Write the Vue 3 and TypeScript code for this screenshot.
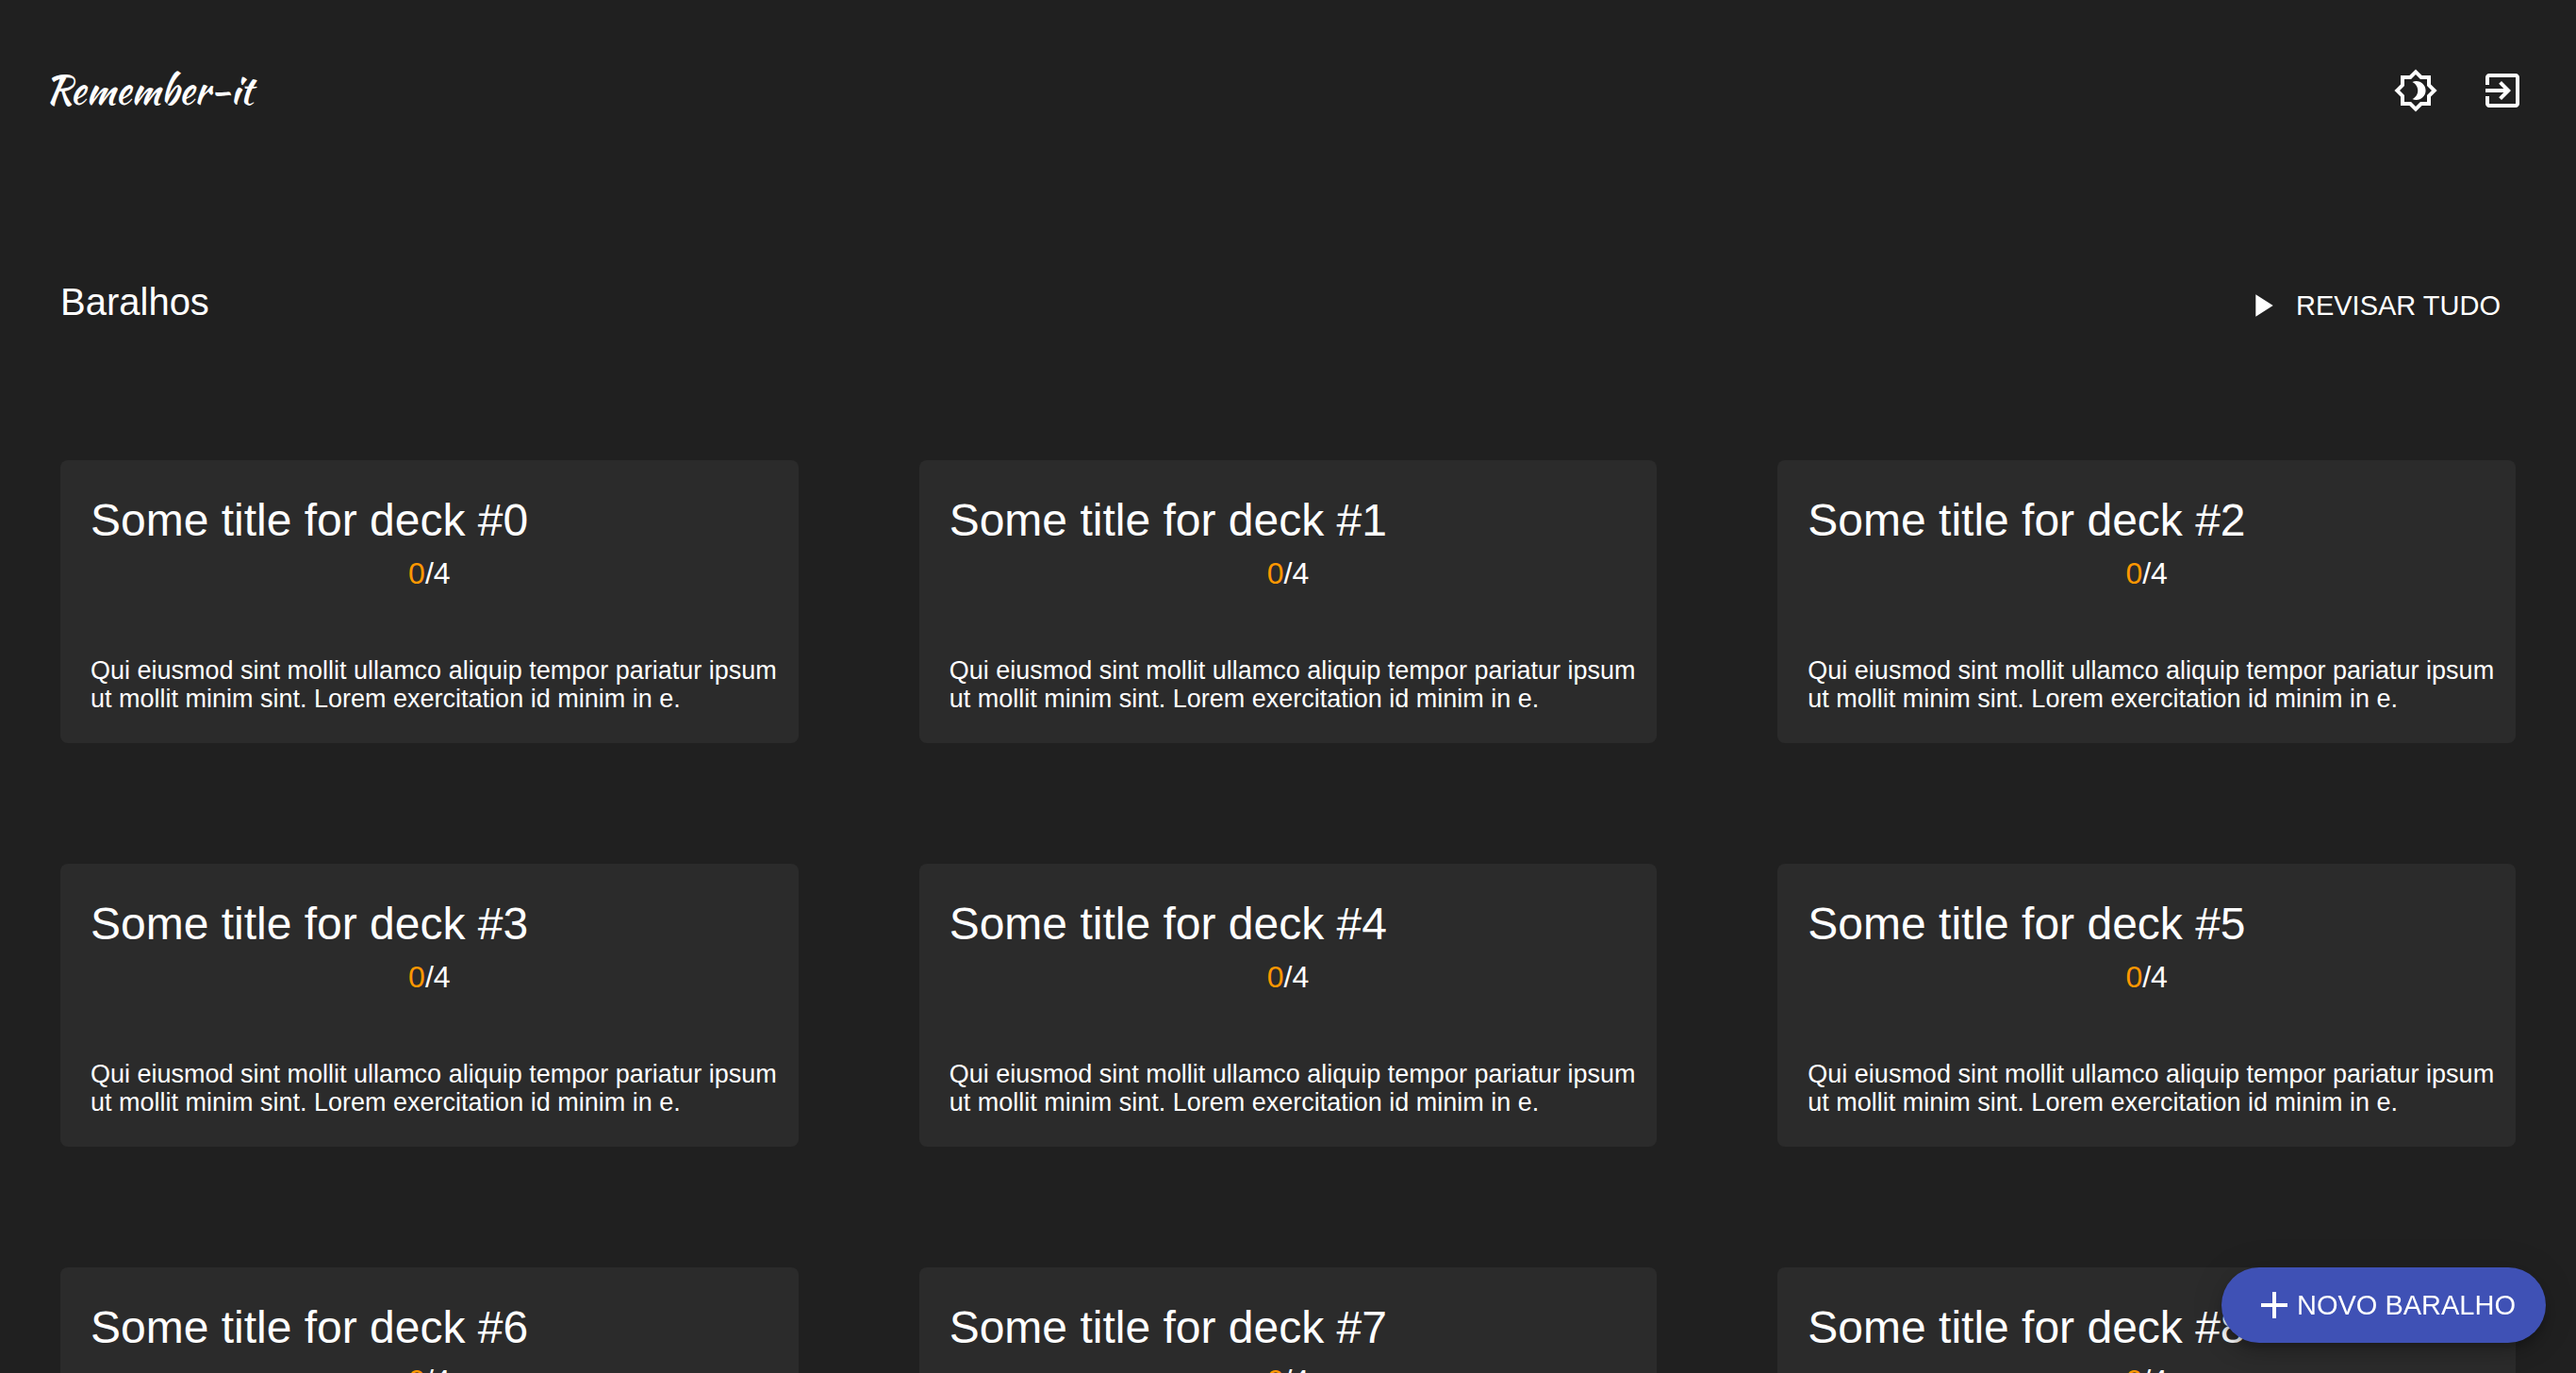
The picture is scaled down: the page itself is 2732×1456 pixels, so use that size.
<script setup lang="ts">
interface Deck {
  id: number
  title: string
  reviewed: number
  total: number
  description: string
}

const decks: Deck[] = Array.from({ length: 9 }, (_, id) => ({
  id,
  title: `Some title for deck #${id}`,
  reviewed: 0,
  total: 4,
  description:
    'Qui eiusmod sint mollit ullamco aliquip tempor pariatur ipsum ut mollit minim sint. Lorem exercitation id minim in e.',
}))
</script>

<template>
  <div class="page">
    <header class="topbar">
      <a class="logo" href="#">Remember-it</a>
      <nav class="actions">
        <button class="icon-button" type="button" aria-label="Alternar tema">
          <svg class="icon" viewBox="0 0 24 24" aria-hidden="true">
            <path
              d="M20 8.69V4h-4.69L12 .69 8.69 4H4v4.69L.69 12 4 15.31V20h4.69L12 23.31 15.31 20H20v-4.69L23.31 12 20 8.69zm-2 5.79V18h-3.52L12 20.48 9.52 18H6v-3.52L3.52 12 6 9.52V6h3.52L12 3.52 14.48 6H18v3.52L20.48 12 18 14.48zM12.29 7c-.74 0-1.45.17-2.08.46 1.72.79 2.92 2.53 2.92 4.54s-1.2 3.75-2.92 4.54c.63.29 1.34.46 2.08.46 2.76 0 5-2.24 5-5s-2.24-5-5-5z"
            />
          </svg>
        </button>
        <button class="icon-button" type="button" aria-label="Sair">
          <svg class="icon" viewBox="0 0 24 24" aria-hidden="true">
            <path
              d="M10.09 15.59L11.5 17l5-5-5-5-1.41 1.41L12.67 11H3v2h9.67l-2.58 2.59zM19 3H5c-1.11 0-2 .9-2 2v4h2V5h14v14H5v-4H3v4c0 1.1.89 2 2 2h14c1.1 0 2-.9 2-2V5c0-1.1-.9-2-2-2z"
            />
          </svg>
        </button>
      </nav>
    </header>

    <main class="content">
      <div class="heading">
        <h1 class="heading-title">Baralhos</h1>
        <button class="review" type="button">
          <svg class="review-icon" viewBox="0 0 24 24" aria-hidden="true">
            <path d="M8 5v14l11-7z" />
          </svg>
          REVISAR TUDO
        </button>
      </div>

      <section class="decks">
        <article v-for="deck in decks" :key="deck.id" class="deck">
          <h2 class="deck-title">{{ deck.title }}</h2>
          <p class="deck-count"><span class="reviewed">{{ deck.reviewed }}</span>/{{ deck.total }}</p>
          <p class="deck-text">{{ deck.description }}</p>
        </article>
      </section>
    </main>

    <button class="fab" type="button">
      <svg class="icon" viewBox="0 0 24 24" aria-hidden="true">
        <path d="M19 13h-6v6h-2v-6H5v-2h6V5h2v6h6v2z" />
      </svg>
      NOVO BARALHO
    </button>
  </div>
</template>

<style>
body {
  margin: 0;
  background: #202020;
}
html {
  scrollbar-width: none;
}
</style>

<style scoped>
.page {
  color: #fff;
  font-family: "Liberation Sans", Arial, sans-serif;
}
h1,
h2,
p {
  margin: 0;
  font-weight: 400;
}
button {
  display: flex;
  align-items: center;
  padding: 0;
  border: 0;
  background: none;
  color: inherit;
  font-family: inherit;
  font-size: 29px;
  cursor: pointer;
}
svg {
  flex: none;
  fill: currentColor;
}
.icon {
  width: 48px;
  height: 48px;
}
.topbar {
  display: flex;
  align-items: center;
  justify-content: space-between;
  height: 192px;
  padding: 0 54px 0 48px;
}
.logo {
  color: inherit;
  font: 400 41px/48px "Kaushan Script", cursive;
  text-decoration: none;
}
.actions {
  display: flex;
  gap: 44px;
}
.content {
  padding: 96px 64px 128px;
}
.heading {
  display: flex;
  align-items: flex-start;
  justify-content: space-between;
  height: 72px;
  margin-bottom: 128px;
}
.heading-title {
  font-size: 40px;
  line-height: 64px;
}
.review {
  gap: 16px;
  height: 72px;
  padding: 0 16px;
}
.review-icon {
  width: 40px;
  height: 40px;
}
.decks {
  display: grid;
  grid-template-columns: repeat(3, 1fr);
  gap: 128px;
}
.deck {
  padding: 32px;
  border-radius: 8px;
  background: #2b2b2b;
}
.deck-title {
  font-size: 48px;
  line-height: 64px;
}
.deck-count {
  margin-bottom: 64px;
  font-size: 32px;
  line-height: 48px;
  text-align: center;
}
.reviewed {
  color: #ff9800;
}
.deck-text {
  margin-right: -16px;
  font-size: 27px;
  line-height: 30px;
}
.fab {
  position: fixed;
  right: 32px;
  bottom: 32px;
  height: 80px;
  padding: 0 32px;
  border-radius: 40px;
  background: #3f51b5;
  box-shadow:
    0 6px 10px -2px rgba(0, 0, 0, 0.2),
    0 12px 20px rgba(0, 0, 0, 0.14),
    0 2px 36px rgba(0, 0, 0, 0.12);
}
</style>
